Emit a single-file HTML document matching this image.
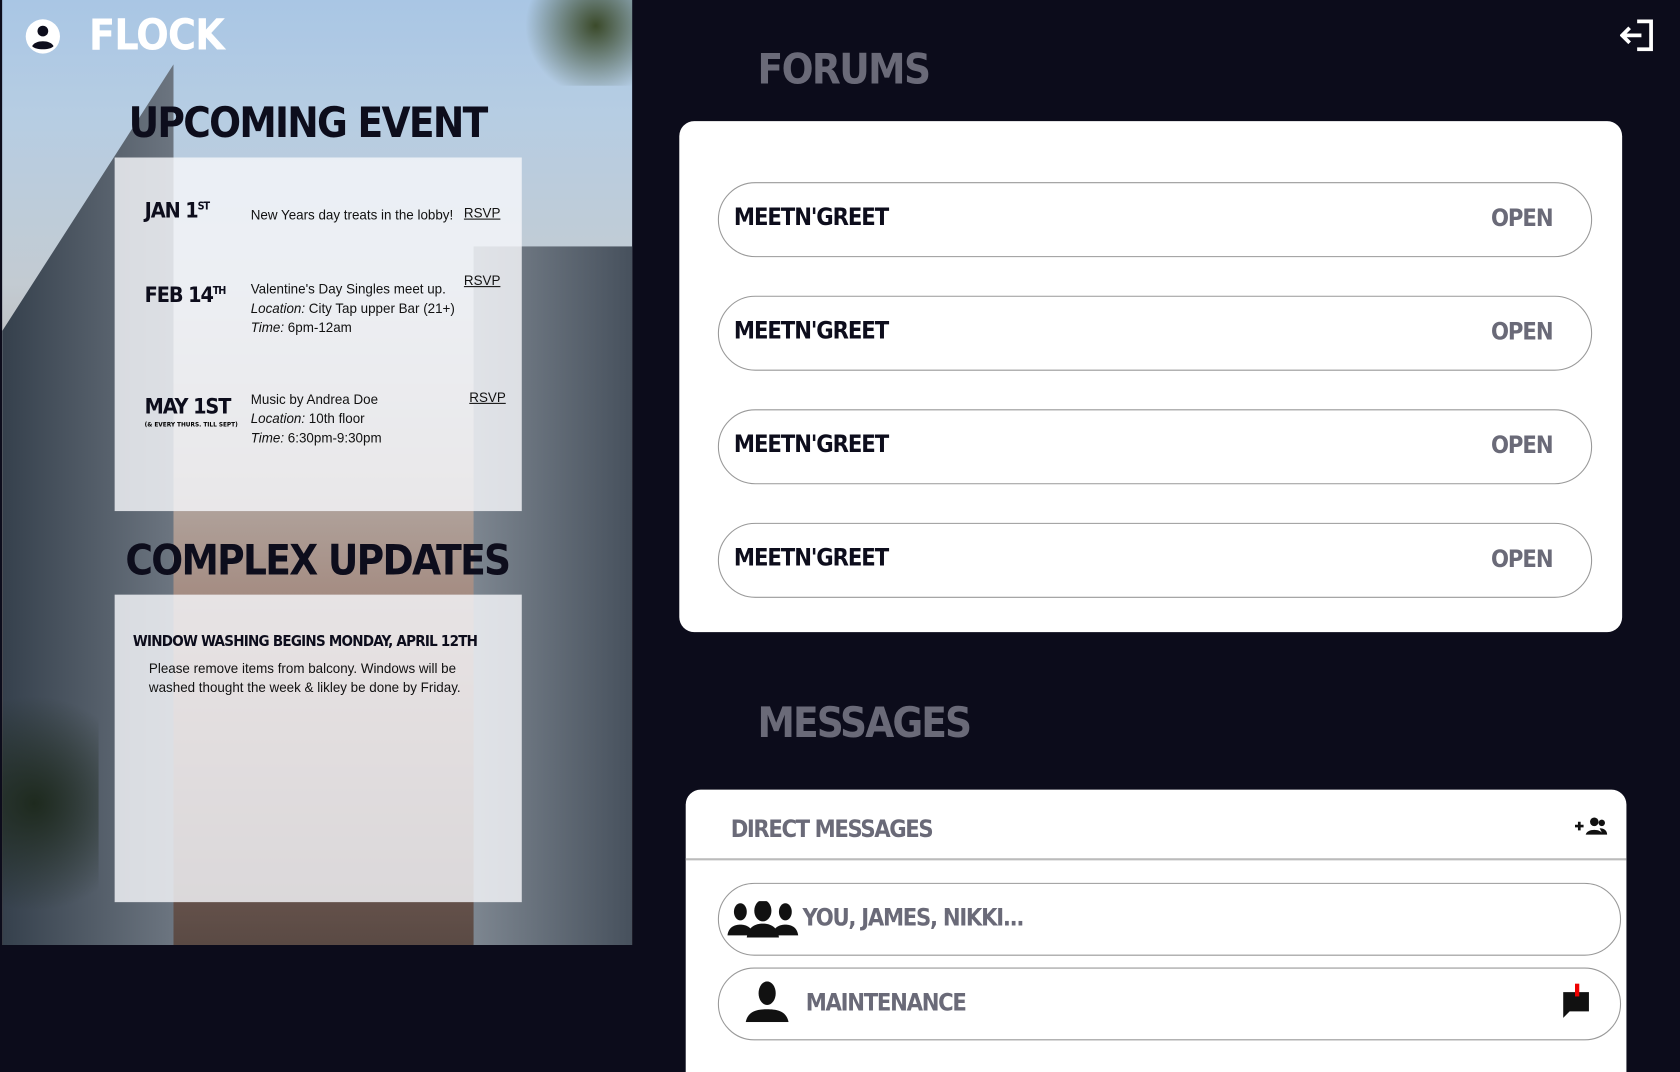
<!DOCTYPE html>
<html><head><meta charset="utf-8"><style>
*{margin:0;padding:0;box-sizing:border-box}
html,body{width:1680px;height:1072px;overflow:hidden;background:#0c0c1b}
#w{width:1568px;height:1001px;transform:scale(1.0714286);transform-origin:0 0;position:relative;font-family:"Liberation Sans",sans-serif}
.d{font-family:"DejaVu Sans Condensed","Liberation Sans Narrow",sans-serif;font-weight:bold;letter-spacing:-1px}
#left{position:absolute;left:2px;top:0;width:588px;height:882px;overflow:hidden;
background:linear-gradient(180deg,#a9c6e4 0%,#b6cde3 12%,#c3cbd2 30%,#b4aaa4 50%,#9c7c70 70%,#7a6058 85%,#5a4a44 100%)}
.bldg{position:absolute;left:0;top:60px;width:160px;height:830px;background:linear-gradient(90deg,#35404c,#6c7580);clip-path:polygon(0 30%,100% 0,100% 100%,0 100%)}
.bldg2{position:absolute;left:440px;top:230px;width:150px;height:660px;background:linear-gradient(90deg,#7d8690,#46505c)}
.panel{position:absolute;background:rgba(245,247,250,.82)}
.ev{position:absolute;font-size:12.5px;color:#111;line-height:18px}
.date{position:absolute;font-size:20px;color:#0d0d1c}
.rsvp{position:absolute;font-size:12.5px;text-decoration:underline;color:#111}
.h1{position:absolute;font-size:39px;color:#0d0d1c;letter-spacing:-1.6px}
.card{position:absolute;background:#fff;border-radius:14px}
.pill{position:absolute;left:36px;width:816px;height:70px;border:1px solid #999;border-radius:35px}
.pill .t{position:absolute;left:14px;top:20px;font-size:22px;color:#0d0d1c}
.pill .o{position:absolute;right:36px;top:21px;font-size:22px;color:#6a6a78}
</style></head><body><div id="w">
<div id="left">
 <div class="bldg"></div><div class="bldg2"></div>
 <div style="position:absolute;left:470px;top:0;width:120px;height:80px;background:radial-gradient(circle at 70% 30%,#3b4a2a,transparent 65%)"></div>
 <div style="position:absolute;left:-30px;top:620px;width:120px;height:260px;background:radial-gradient(circle,#1e2a1e,transparent 70%)"></div>
 <div class="panel" style="left:105px;top:147px;width:380px;height:330px"></div>
 <div class="panel" style="left:105px;top:555px;width:380px;height:287px"></div>
</div>
<svg style="position:absolute;left:22px;top:16px" width="36" height="36" viewBox="0 0 36 36"><circle cx="18" cy="18" r="16" fill="#fff"/><circle cx="18" cy="13" r="5" fill="#0d0d1c"/><path d="M8 27c3-6 17-6 20 0c-3 4-17 4-20 0z" fill="#0d0d1c"/></svg>
<div class="d" style="position:absolute;left:83px;top:10px;font-size:40px;color:#fff">FLOCK</div>
<div class="h1 d" style="left:120px;top:93px">UPCOMING EVENT</div>
<div class="date d" style="left:135px;top:184px">JAN 1<sup style="font-size:10px">ST</sup></div>
<div class="ev" style="left:234px;top:192px">New Years day treats in the lobby!</div>
<div class="rsvp" style="left:433px;top:192px">RSVP</div>
<div class="date d" style="left:135px;top:263px">FEB 14<sup style="font-size:10px">TH</sup></div>
<div class="ev" style="left:234px;top:261px">Valentine's Day Singles meet up.<br><i>Location:</i> City Tap upper Bar (21+)<br><i>Time:</i> 6pm-12am</div>
<div class="rsvp" style="left:433px;top:255px">RSVP</div>
<div class="date d" style="left:135px;top:367px">MAY 1ST</div>
<div class="d" style="position:absolute;left:135px;top:393px;font-size:6px;letter-spacing:0">(&amp; EVERY THURS. TILL SEPT)</div>
<div class="ev" style="left:234px;top:364px">Music by Andrea Doe<br><i>Location:</i> 10th floor<br><i>Time:</i> 6:30pm-9:30pm</div>
<div class="rsvp" style="left:438px;top:364px">RSVP</div>
<div class="h1 d" style="left:117px;top:501px">COMPLEX UPDATES</div>
<div class="d" style="position:absolute;left:124px;top:591px;font-size:14px;color:#0d0d1c;letter-spacing:-.7px">WINDOW WASHING BEGINS MONDAY, APRIL 12TH</div>
<div class="ev" style="left:139px;top:615px">Please remove items from balcony. Windows will be<br>washed thought the week &amp; likley be done by Friday.</div>

<svg style="position:absolute;left:1512px;top:18px" width="32" height="30" viewBox="0 0 32 30"><path d="M16 2h13v26h-13" fill="none" stroke="#fff" stroke-width="3.5"/><path d="M2 15h18M9 8l-7 7l7 7" fill="none" stroke="#fff" stroke-width="3.5"/></svg>
<div class="d" style="position:absolute;left:707px;top:43px;font-size:39px;color:#6a6a78;letter-spacing:-1.5px">FORUMS</div>
<div class="card" style="left:634px;top:113px;width:880px;height:477px">
 <div class="pill" style="top:57px"><span class="t d">MEETN'GREET</span><span class="o d">OPEN</span></div>
 <div class="pill" style="top:163px"><span class="t d">MEETN'GREET</span><span class="o d">OPEN</span></div>
 <div class="pill" style="top:269px"><span class="t d">MEETN'GREET</span><span class="o d">OPEN</span></div>
 <div class="pill" style="top:375px"><span class="t d">MEETN'GREET</span><span class="o d">OPEN</span></div>
</div>
<div class="d" style="position:absolute;left:707px;top:653px;font-size:39px;color:#6a6a78;letter-spacing:-1.8px">MESSAGES</div>
<div class="card" style="left:640px;top:737px;width:878px;height:300px;border-radius:14px 14px 0 0">
 <div class="d" style="position:absolute;left:42px;top:25px;font-size:22px;color:#6a6a78;letter-spacing:-1.3px">DIRECT MESSAGES</div>
 <svg style="position:absolute;left:829px;top:25px" width="32" height="20" viewBox="0 0 32 20"><path d="M1 9h8M5 5v8" stroke="#111" stroke-width="2.5"/><circle cx="19" cy="5" r="4" fill="#111"/><circle cx="26" cy="6" r="3" fill="#111"/><path d="M11 17c1-6 15-6 16 0zM24 11c4 0 7 2 7 6h-4z" fill="#111"/></svg>
 <div style="position:absolute;left:0;top:64px;width:100%;border-top:2px solid #bbb"></div>
 <div class="pill" style="left:30px;top:87px;width:843px;height:68px;border-radius:34px">
  <svg style="position:absolute;left:6px;top:16px" width="70" height="34" viewBox="0 0 70 34"><ellipse cx="14" cy="10" rx="6" ry="8" fill="#111"/><ellipse cx="56" cy="10" rx="6" ry="8" fill="#111"/><path d="M2 32c1-8 7-10 12-10s11 2 12 10zM44 32c1-8 7-10 12-10s11 2 12 10z" fill="#111"/><ellipse cx="35" cy="9" rx="8" ry="10" fill="#111"/><path d="M20 34c1-10 8-13 15-13s14 3 15 13z" fill="#111"/></svg>
  <span class="d" style="position:absolute;left:78px;top:20px;font-size:22px;color:#6a6a78;letter-spacing:-1.2px">YOU, JAMES, NIKKI...</span>
 </div>
 <div class="pill" style="left:30px;top:166px;width:843px;height:68px;border-radius:34px">
  <svg style="position:absolute;left:24px;top:12px" width="42" height="38" viewBox="0 0 42 38"><ellipse cx="21" cy="11" rx="8" ry="11" fill="#111"/><path d="M1 38c2-10 10-12 20-12s18 2 20 12z" fill="#111"/></svg>
  <span class="d" style="position:absolute;left:81px;top:20px;font-size:22px;color:#6a6a78;letter-spacing:-1.2px">MAINTENANCE</span>
  <svg style="position:absolute;left:786px;top:14px" width="28" height="34" viewBox="0 0 28 34"><path d="M2 8h24v18h-18l-6 6z" fill="#111"/><rect x="13" y="0" width="4" height="12" fill="#e00"/></svg>
 </div>
</div>
</div></body></html>
